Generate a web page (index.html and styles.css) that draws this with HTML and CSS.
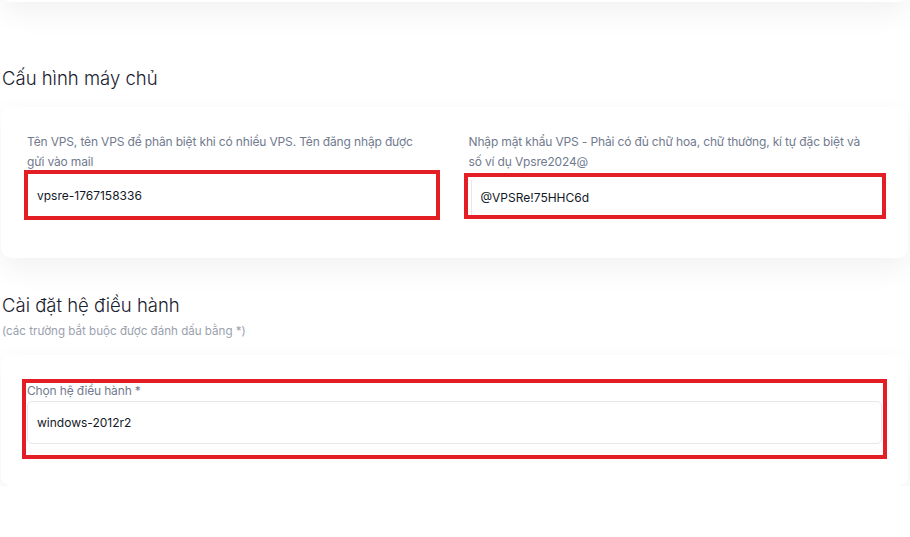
FILE: index.html
```html
<!DOCTYPE html>
<html lang="vi">
<head>
  <meta charset="UTF-8">
  <title>Cấu hình VPS</title>
  <link rel="stylesheet" href="styles.css">
</head>
<body>
  <div class="page">
    <div class="card card-top"></div>

    <h2 class="section-title first">Cấu hình máy chủ</h2>
    <div class="card card-config">
      <div class="row">
        <div class="col">
          <label class="field-label" for="vps-name">Tên VPS, tên VPS để phân biệt khi có nhiều VPS. Tên đăng nhập được gửi vào mail</label>
          <div class="mark mark-name">
            <input id="vps-name" class="field-input plain" value="vpsre-1767158336">
          </div>
        </div>
        <div class="col">
          <label class="field-label" for="vps-pass">Nhập mật khẩu VPS - Phải có đủ chữ hoa, chữ thường, kí tự đặc biệt và số ví dụ Vpsre2024@</label>
          <div class="mark mark-pass">
            <input id="vps-pass" class="field-input edge" value="@VPSRe!75HHC6d">
          </div>
        </div>
      </div>
    </div>

    <h2 class="section-title">Cài đặt hệ điều hành</h2>
    <p class="section-note">(các trường bắt buộc được đánh dấu bằng *)</p>
    <div class="card card-os">
      <div class="mark mark-os">
        <label class="field-label single" for="os">Chọn hệ điều hành *</label>
        <input id="os" class="field-input boxed" value="windows-2012r2">
      </div>
    </div>
  </div>
</body>
</html>
```

FILE: styles.css
```css
body {
  margin: 0;
  background: #ffffff;
  font-family: Inter, 'Noto Sans', sans-serif;
  color: #111827;
}

.page {
  padding: 0 2px 0 1px;
}

.card {
  background: #ffffff;
  border-radius: 10px;
  box-shadow: 0 10px 30px rgba(0, 0, 0, 0.06);
}

/* previous card, only its bottom edge is in view */
.card-top {
  height: 42px;
  margin-top: -40px;
}

.section-title {
  margin: 33px 0 0 1px;
  font-size: 18.5px;
  line-height: 28px;
  font-weight: 300;
  color: #19212f;
}

.section-title.first {
  margin-top: 62px;
}

.section-note {
  margin: 3px 0 0 1px;
  font-size: 11.6px;
  line-height: 18px;
  color: #9aa1ad;
}

.card-config {
  margin-top: 15px;
  padding: 25px 12px 38px;
}

.card-os {
  margin-top: 15px;
  padding: 24px 12px 27px;
}

.row {
  display: grid;
  grid-template-columns: 1fr 1fr;
}

.col {
  padding: 0 14px;
  min-width: 0;
}

.field-label {
  display: block;
  font-size: 12px;
  line-height: 20px;
  letter-spacing: -0.15px;
  color: #717a8e;
}

.row .field-label {
  padding-right: 16px;
}

.field-label.single {
  line-height: 16px;
}

.mark {
  border: 4px solid #e31e24;
}

.mark-name {
  margin: -2px 1px 0 -3px;
}

.mark-pass {
  margin: 1px -4px 0 -5px;
  padding: 3px 0 0 3px;
}

.mark-os {
  margin: 0 9px;
  padding: 0 1px 11px;
}

.field-input {
  display: block;
  width: 100%;
  box-sizing: border-box;
  border: none;
  outline: none;
  background: #ffffff;
  font-family: Inter, 'Noto Sans', sans-serif;
  font-size: 12px;
  color: #111827;
}

.field-input.plain {
  height: 42px;
  padding: 0 9px;
}

.field-input.edge {
  height: 35px;
  padding: 0 9px;
  border-left: 1px solid #e5e7eb;
}

.field-input.boxed {
  height: 43px;
  margin-top: 2px;
  padding: 0 9px;
  border: 1px solid #e5e7eb;
  border-radius: 5px;
}
```
